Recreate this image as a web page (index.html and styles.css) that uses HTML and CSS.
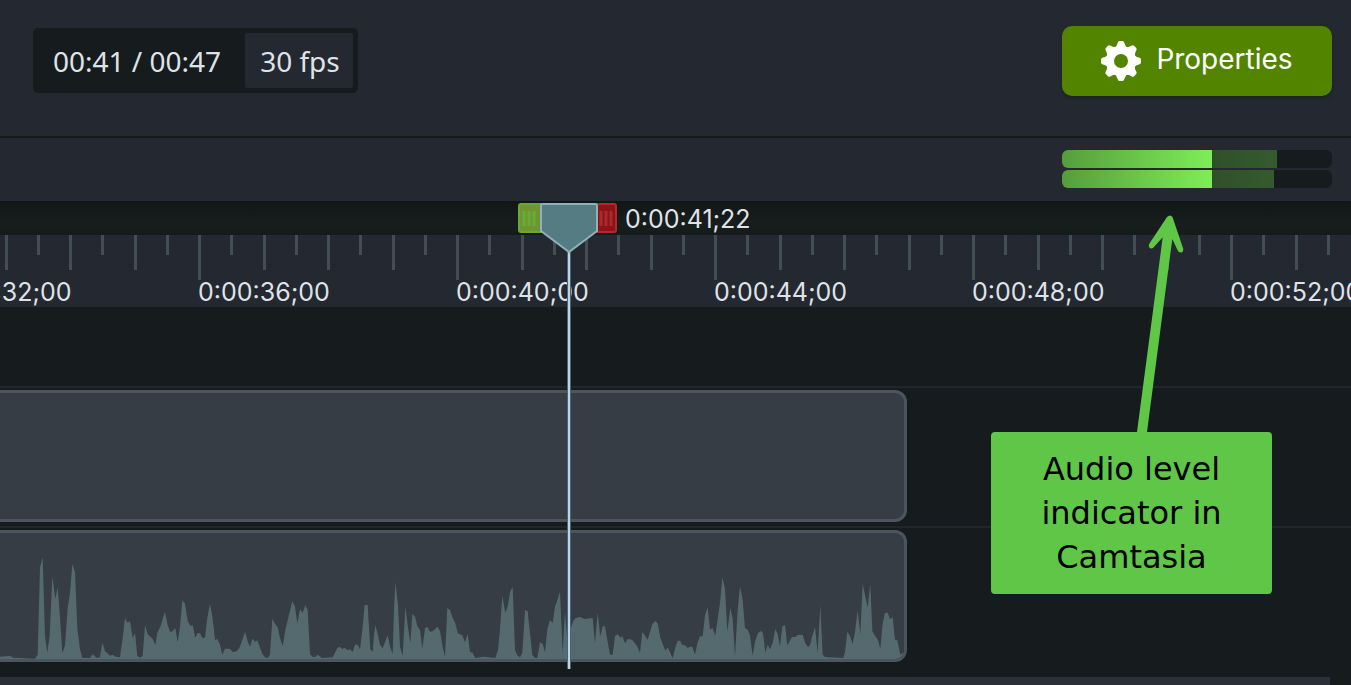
FILE: index.html
```html
<!DOCTYPE html>
<html lang="en">
<head>
<meta charset="utf-8">
<title>Timeline</title>
<link rel="stylesheet" href="styles.css">
</head>
<body>
<div class="app">
  <header class="toolbar">
    <div class="timecode">
      <span class="timecode-value">00:41 / 00:47</span>
      <span class="timecode-fps">30 fps</span>
    </div>
    <button class="properties" type="button">
      <svg class="gear" viewBox="-20 -20 40 40" aria-hidden="true">
        <defs>
          <path id="tooth" d="M-6.500 -13Q-4 -15 -3.400 -18Q-3 -20 -1.500 -20H1.500Q3 -20 3.400 -18Q4 -15 6.500 -13Z"/>
        </defs>
        <circle r="11" fill="none" stroke="#fff" stroke-width="8"/>
        <g fill="#fff">
          <use href="#tooth"/>
          <use href="#tooth" transform="rotate(45)"/>
          <use href="#tooth" transform="rotate(90)"/>
          <use href="#tooth" transform="rotate(135)"/>
          <use href="#tooth" transform="rotate(180)"/>
          <use href="#tooth" transform="rotate(225)"/>
          <use href="#tooth" transform="rotate(270)"/>
          <use href="#tooth" transform="rotate(315)"/>
        </g>
      </svg>
      <span class="properties-label">Properties</span>
    </button>
  </header>

  <div class="meters">
    <div class="meter"><div class="meter-level"></div><div class="meter-peak" style="width:65px"></div></div>
    <div class="meter"><div class="meter-level"></div><div class="meter-peak" style="width:62px"></div></div>
  </div>

  <main class="timeline">
    <div class="scrub"></div>
    <div class="ruler">
      <div class="segment"><div class="ticks"><i></i><i></i><i></i><i></i><i></i><i></i><i></i><i></i></div><span>0:00:32;00</span></div>
      <div class="segment"><div class="ticks"><i></i><i></i><i></i><i></i><i></i><i></i><i></i><i></i></div><span>0:00:36;00</span></div>
      <div class="segment"><div class="ticks"><i></i><i></i><i></i><i></i><i></i><i></i><i></i><i></i></div><span>0:00:40;00</span></div>
      <div class="segment"><div class="ticks"><i></i><i></i><i></i><i></i><i></i><i></i><i></i><i></i></div><span>0:00:44;00</span></div>
      <div class="segment"><div class="ticks"><i></i><i></i><i></i><i></i><i></i><i></i><i></i><i></i></div><span>0:00:48;00</span></div>
      <div class="segment"><div class="ticks"><i></i><i></i><i></i><i></i><i></i><i></i><i></i><i></i></div><span>0:00:52;00</span></div>
    </div>
    <div class="tracks">
      <div class="track-gap"></div>
      <div class="track"><div class="clip" style="width:907px"></div></div>
      <div class="track"><div class="clip" style="width:907px">
        <svg class="wave" viewBox="0 9 2712 378" preserveAspectRatio="none" aria-hidden="true">
          <path d="M0 387V380L30 378L40 383L105 386L113 374L120 112L128 82L135 318L142 368L149 318L157 138L166 208L173 172L180 262L187 370L195 346L203 235L210 188L217 102L225 126L232 295L240 358L247 383L270 384L278 373L290 384L300 382L307 338L315 363L330 377L338 374L347 380L360 382L368 325L375 264L382 278L390 274L398 324L405 309L412 378L420 383L428 378L435 284L443 313L458 326L466 345L472 308L481 290L495 245L503 286L511 306L517 304L526 294L533 337L540 291L547 211L555 221L563 272L571 288L578 285L586 323L593 309L600 310L607 323H615L622 263L630 222L638 267L645 330L652 327L660 344L667 374L675 356H690L698 366L710 364L718 354L726 333L735 305L743 334L750 350L757 326L765 335L772 331L787 372L795 382L803 384L810 374L817 266L825 282L833 292L840 324L848 348L856 300L868 250L877 214L885 230L892 280L900 238L908 248L916 226L923 240L930 372L937 380L944 382L953 374L966 384L998 382L1012 354L1019 350L1027 357L1034 353L1043 361L1050 358L1058 366L1065 344H1073L1080 358L1087 301L1094 225H1103L1111 358L1118 367L1122 315L1126 285L1134 316L1140 344L1148 355L1163 316L1171 353L1178 372L1182 240L1186 156L1194 225L1200 350L1208 377L1216 230L1224 292L1231 339L1237 252L1245 260L1252 288L1260 300L1267 355L1275 295L1282 290L1290 305L1298 304L1312 290L1320 302L1328 350L1335 380L1342 234L1350 240L1357 261L1366 280L1373 310L1387 316L1395 337L1403 311L1410 366L1418 368L1426 384L1450 380L1486 384L1494 360L1500 297L1507 198L1516 248L1523 230L1530 187L1538 170L1545 360L1552 376L1560 382L1567 368L1575 240L1583 244L1590 310L1597 375L1605 384H1612L1620 337L1628 341L1635 367L1642 298L1650 270L1658 279L1665 230L1673 208L1680 185L1688 370L1695 245L1702 330L1710 302L1720 272L1727 264L1740 261L1753 267L1778 264L1785 338L1793 248L1801 320L1808 289H1815L1823 335L1830 374H1838L1845 318L1853 313L1861 323L1867 318L1875 340L1883 327L1896 329L1911 348L1920 368L1927 305L1943 329L1957 282L1966 273L1973 280L1981 323L1996 362L2003 352L2018 385L2026 352L2033 333L2040 332L2047 345L2055 346L2063 354L2070 350H2077L2085 374L2092 340L2100 319H2108L2115 256L2123 232L2130 300L2137 293L2146 316L2160 220L2167 142L2175 176L2182 305L2191 234L2198 266L2205 378L2213 240L2220 168L2228 210L2235 295L2242 298L2250 316L2258 377L2265 335L2274 309L2283 303L2289 309L2296 368L2303 344L2310 358L2318 339L2326 297L2333 312L2340 350L2347 289L2355 285L2362 346L2376 321L2386 321L2394 314L2408 315L2416 340L2424 352L2430 346L2437 317L2445 291L2453 369L2461 225L2468 374L2475 381L2530 384L2535 366L2542 305L2550 318L2558 342L2565 306L2573 241L2581 313L2588 162L2603 233L2611 162L2617 304L2634 331L2641 357L2648 281L2655 248H2663L2670 268L2678 262L2685 329L2692 331L2701 374L2708 368L2712 378V387Z" fill="#546a6f"/>
        </svg>
      </div></div>
    </div>
    <div class="scrollbar"></div>

    <div class="playhead">
      <svg width="102" height="470" viewBox="0 0 102 470" aria-hidden="true">
        <rect x="51" y="48" width="4" height="420" fill="#52636b"/>
        <rect x="52" y="48" width="2" height="420" fill="#b8d6eb"/>
        <rect x="3" y="3" width="40" height="28" rx="2" fill="#6f9431" stroke="#64aa35" stroke-width="2"/>
        <path d="M8 10V25M13 10V25M18 10V25" stroke="#65ad35" stroke-width="3"/>
        <rect x="62" y="3" width="38" height="28" rx="2" fill="#8f1316" stroke="#ad2b2e" stroke-width="2"/>
        <path d="M85 10V25M90 10V25M95 10V25" stroke="#a82a2c" stroke-width="3"/>
        <path d="M27 3H79Q81 3 81 5V30L53 51L25 30V5Q25 3 27 3Z" fill="#557c82" stroke="#8db2b9" stroke-width="2"/>
      </svg>
      <span class="playhead-time">0:00:41;22</span>
    </div>
  </main>

  <aside class="callout">
    <svg class="arrow" viewBox="0 0 56 217" aria-hidden="true">
      <path d="M6 217L31.700 22.300L22.500 32.500Q20 34.500 18.300 32.500Q17.300 30.500 18.300 28.700L36 2Q39 -1 41.500 2L52.300 34Q52.500 37 50 37.500Q48 37.500 47 36L41.300 24L16 217Z" fill="#60c647"/>
    </svg>
    <p>Audio level<br>indicator in<br>Camtasia</p>
  </aside>
</div>
</body>
</html>
```

FILE: styles.css
```css
* { box-sizing: border-box; }

body {
  margin: 0;
  background: #161b1d;
  color: #dfe3e8;
  font-family: Inter, "Liberation Sans", sans-serif;
}

.app {
  position: relative;
  display: flex;
  flex-direction: column;
  min-height: 100vh;
  overflow: hidden;
}

.toolbar {
  display: flex;
  justify-content: space-between;
  align-items: flex-start;
  padding: 26px 19px 40px 33px;
  background: #242830;
  border-bottom: 2px solid #171a1d;
}

.timecode {
  display: flex;
  margin-top: 2px;
  padding: 5px;
  gap: 24px;
  border-radius: 5px;
  background: #161b1d;
  font-family: "Noto Sans", sans-serif;
  font-size: 28px;
  line-height: 57px;
  white-space: nowrap;
}

.timecode-value { height: 55px; padding-left: 15px; }

.timecode-fps {
  height: 55px;
  padding: 0 13px 0 15px;
  border-radius: 2px;
  background: #242830;
}

.properties {
  display: flex;
  justify-content: center;
  align-items: center;
  gap: 15px;
  width: 270px;
  height: 70px;
  padding: 0;
  border: 0;
  border-radius: 10px;
  background: #528400;
  box-shadow: 0 2px 3px #1d2126;
  color: #fff;
  font-family: inherit;
  font-size: 28px;
}

.properties-label { padding-bottom: 4px; }

.gear { width: 40px; height: 40px; }

.meters {
  display: flex;
  flex-direction: column;
  align-items: flex-end;
  gap: 2px;
  padding: 12px 19px 13px;
  background: #242830;
}

.meter {
  display: flex;
  width: 270px;
  height: 18px;
  border-radius: 6px;
  overflow: hidden;
  background: #161b1d;
}

.meter-level { width: 150px; background: linear-gradient(90deg, #559d3c, #7eee58); }
.meter-peak { background: linear-gradient(90deg, #30502b, #345b2e); }

.timeline {
  position: relative;
  display: flex;
  flex: 1;
  flex-direction: column;
  overflow: hidden;
}

.scrub {
  height: 34px;
  background: linear-gradient(#121617, #181d1e 70%, #151a1b);
}

.ruler {
  display: flex;
  height: 72px;
  padding-left: 198px;
  background: #242830;
  overflow: hidden;
}

.segment {
  flex: none;
  width: 258px;
  font-size: 25px;
  line-height: 24px;
}

.segment:first-child { margin-left: -258px; }
.segment span { display: block; }

.ticks {
  display: grid;
  grid-template-columns: repeat(8, 1fr);
  height: 45px;
}

.ticks i { width: 3px; height: 20px; background: #434e54; }
.ticks i:nth-child(odd) { height: 35px; }
.ticks i:first-child { height: 45px; }

.tracks { flex: 1; }
.track-gap { height: 79px; }

.track {
  height: 140px;
  padding: 2px 0 4px;
  border-top: 2px solid #22262c;
}

.clip {
  height: 132px;
  border: 3px solid #4a555d;
  border-left: 0;
  border-radius: 0 12px 12px 0;
  background: #363d45;
  overflow: hidden;
}

.wave { display: block; width: 100%; height: 126px; }

.scrollbar { height: 8px; margin-right: 21px; background: #2a3037; }

.playhead {
  position: absolute;
  top: 0;
  left: 516px;
  display: flex;
  gap: 7px;
}

.playhead-time { font-size: 25px; line-height: 36px; }

.callout {
  position: absolute;
  top: 432px;
  left: 991px;
  width: 281px;
  padding: 15px 0;
  border-radius: 4px;
  background: #60c647;
  color: #000;
  font-family: "DejaVu Sans", sans-serif;
  font-size: 32px;
  line-height: 44px;
  text-align: center;
}

.callout p { margin: 0; }

.arrow {
  position: absolute;
  left: 140px;
  bottom: 100%;
  width: 56px;
  height: 217px;
}
```
